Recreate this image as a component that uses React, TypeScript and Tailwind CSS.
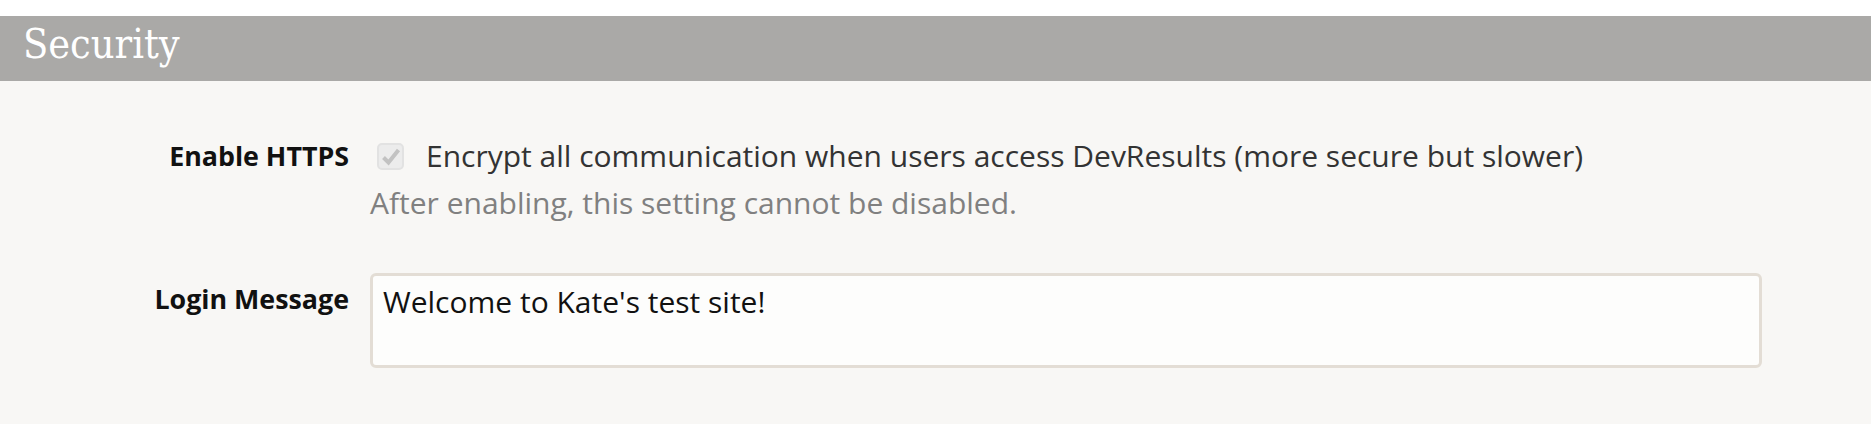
import React from "react";

export default function App() {
  return (
    <div className="w-[1871px] h-[436px] bg-white pt-[16px]" style={{ fontFamily: '"Open Sans", sans-serif' }}>
      <div className="h-[65px] bg-[#aaa9a7] flex items-center pl-[23px]">
        <h2
          className="text-white text-[41px] leading-none pb-[8px]"
          style={{ fontFamily: '"DejaVu Serif Condensed", "DejaVu Serif", serif' }}
        >
          Security
        </h2>
      </div>
      <div className="bg-[#f8f7f5] h-[343px] pt-[55px] flex flex-col gap-[50px]">
        <div className="flex gap-[21px]">
          <div className="w-[349px] text-right font-bold text-[26.8px] leading-[40px] text-[#111]">Enable HTTPS</div>
          <div className="flex flex-col">
            <div className="flex items-center h-[40px] pl-[7px] gap-[22px]">
              <div className="w-[27px] h-[27px] rounded-[5px] border-2 border-[#e2e2e2] bg-[#ececec] flex items-center justify-center">
                <svg width="20" height="19" viewBox="0 0 20 19">
                  <path d="M2.5 10.5 L7.5 15.5 L17.5 3" fill="none" stroke="#c2c2c2" strokeWidth="4" strokeLinejoin="miter" />
                </svg>
              </div>
              <span className="text-[30px] leading-[40px] text-[#333]">
                Encrypt all communication when users access DevResults (more secure but slower)
              </span>
            </div>
            <div className="mt-[7px] text-[30px] leading-[40px] text-[#808080]">
              After enabling, this setting cannot be disabled.
            </div>
          </div>
        </div>
        <div className="flex gap-[21px]">
          <div className="w-[349px] text-right font-bold text-[26.8px] leading-[40px] text-[#111] mt-[6px]">Login Message</div>
          <div className="w-[1392px] h-[95px] rounded-[6px] border-[3px] border-[#e3ddd5] bg-[#fdfdfc] pt-[6px] px-[10px] text-[30px] leading-[40px] text-[#111]">
            Welcome to Kate's test site!
          </div>
        </div>
      </div>
    </div>
  );
}
